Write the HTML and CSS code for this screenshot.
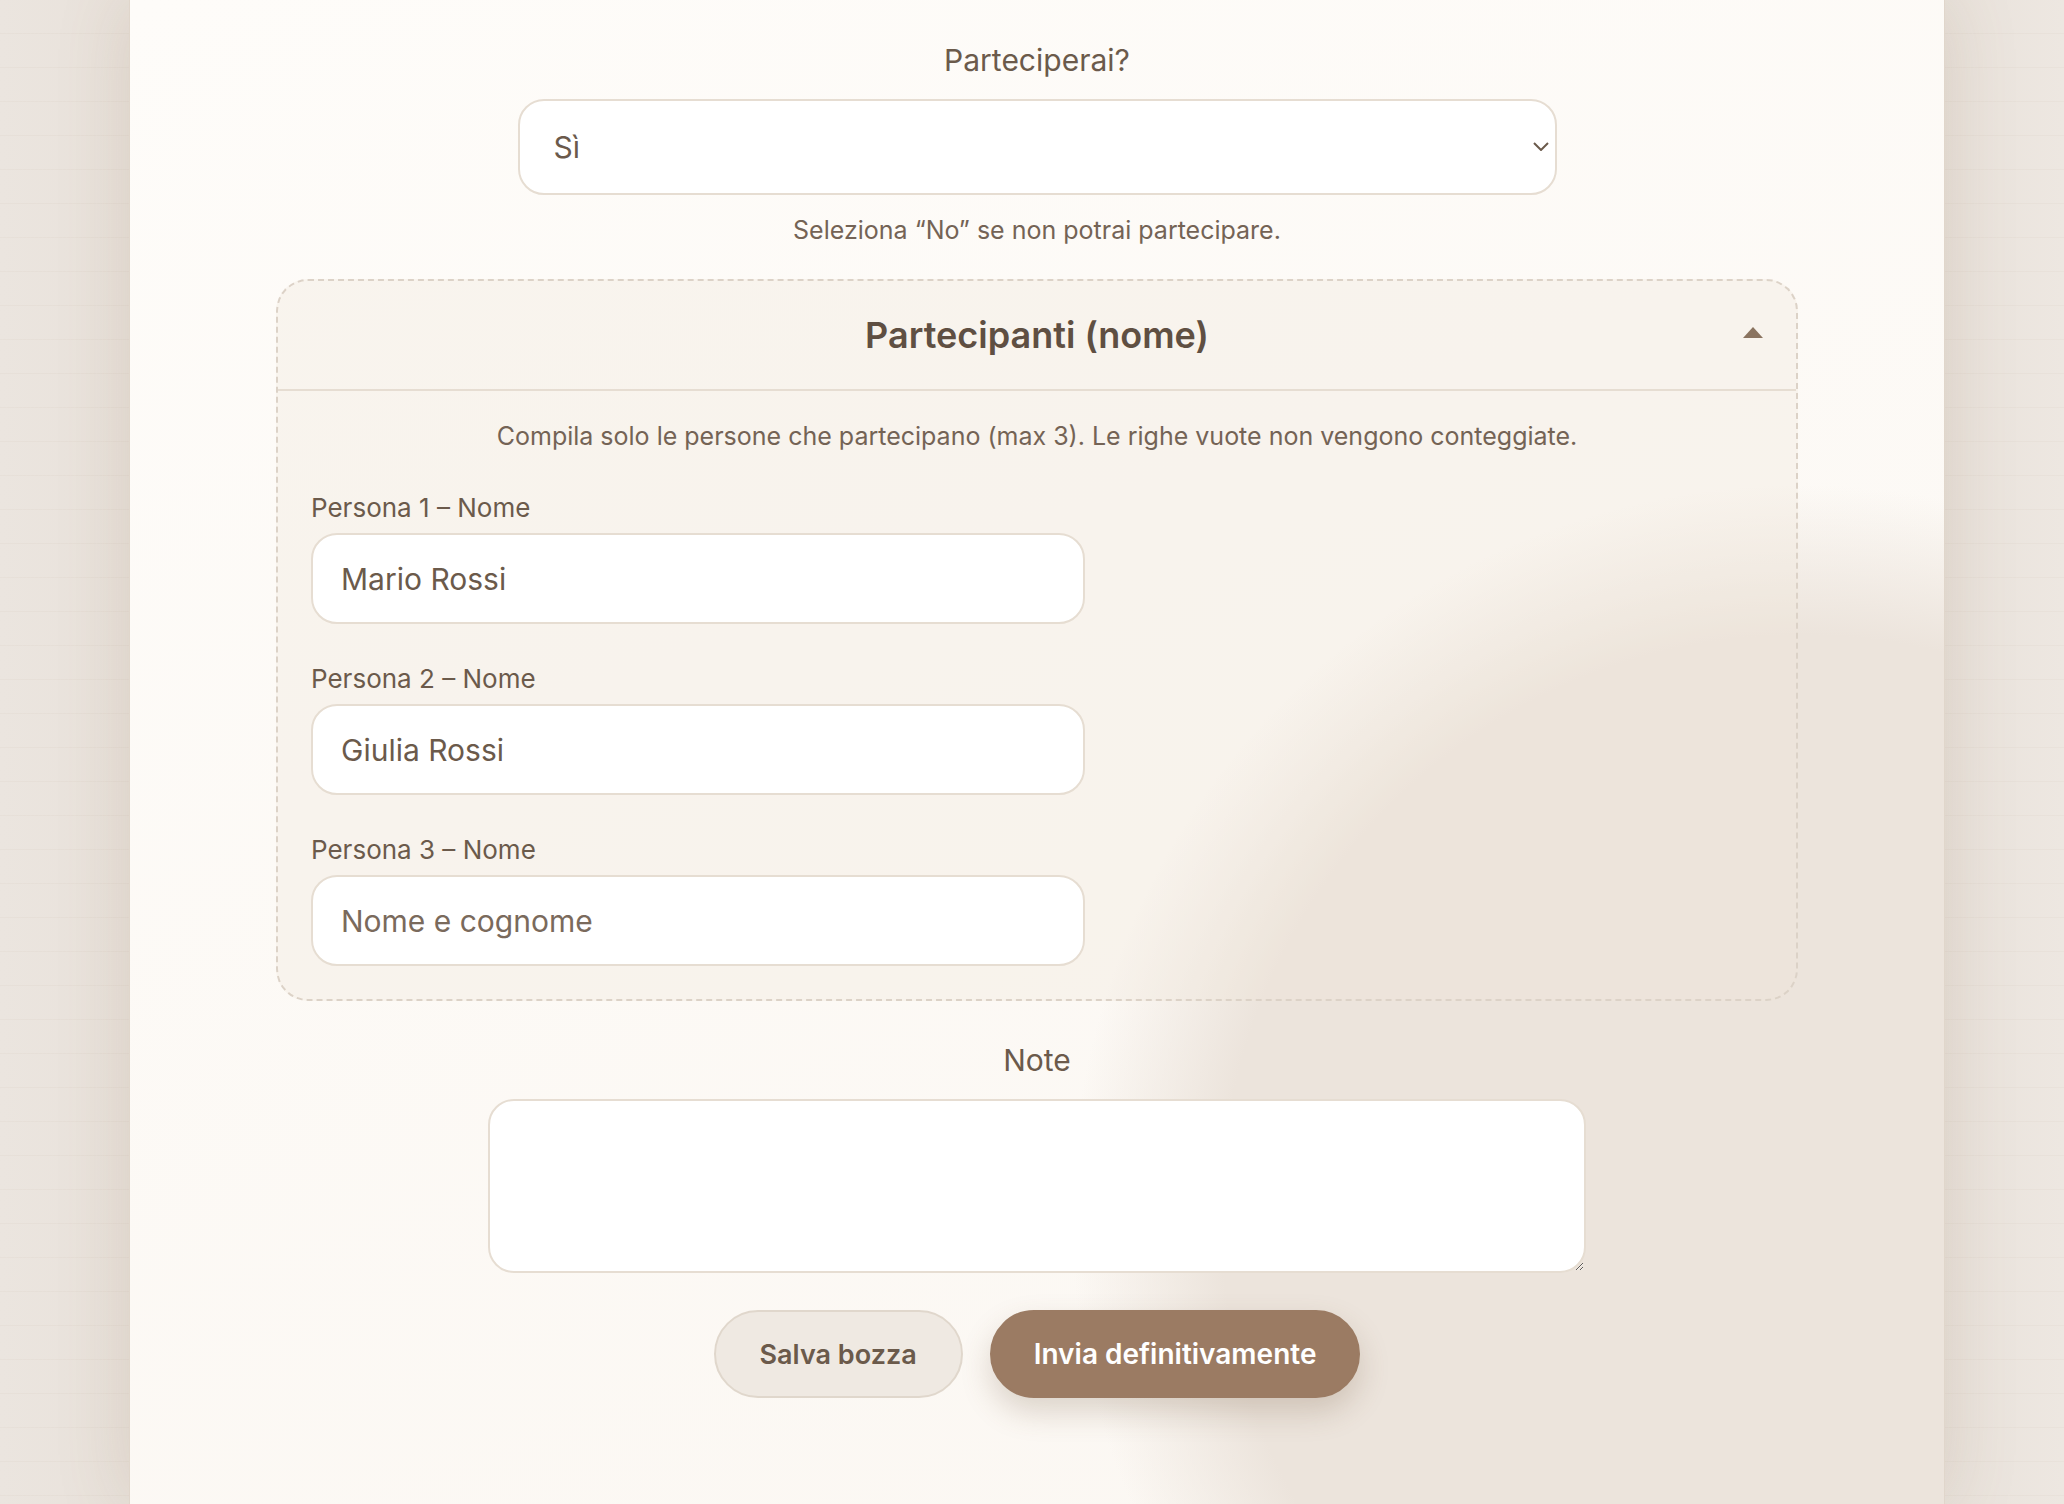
FILE: index.html
```html
<!DOCTYPE html>
<html lang="it">
<head>
  <meta charset="UTF-8" />
  <meta name="viewport" content="width=device-width, initial-scale=1.0"/>
  <title>Conferma partecipazione</title>
  <link rel="stylesheet" href="styles.css">
</head>
<body>
  <main class="sheet">
    <form class="rsvp" onsubmit="return false">

      <div class="field">
        <label class="field-label" for="attend">Parteciperai?</label>
        <div class="select-wrap">
          <select class="control select" id="attend">
            <option>Sì</option>
            <option>No</option>
          </select>
          <svg class="chevron" viewBox="0 0 16 9" aria-hidden="true"><path d="M1 1 L8 8 L15 1"/></svg>
        </div>
        <p class="help">Seleziona “No” se non potrai partecipare.</p>
      </div>

      <details class="guests" open>
        <summary class="guests-head">
          <span class="guests-title">Partecipanti (nome)</span>
          <svg class="caret" viewBox="0 0 20 11" aria-hidden="true"><path d="M10 0 L20 11 L0 11 Z"/></svg>
        </summary>
        <div class="guests-body">
          <p class="help">Compila solo le persone che partecipano (max 3). Le righe vuote non vengono conteggiate.</p>

          <div class="guest">
            <label class="guest-label" for="p1">Persona 1 – Nome</label>
            <input class="control guest-input" id="p1" type="text" value="Mario Rossi" placeholder="Nome e cognome">
          </div>
          <div class="guest">
            <label class="guest-label" for="p2">Persona 2 – Nome</label>
            <input class="control guest-input" id="p2" type="text" value="Giulia Rossi" placeholder="Nome e cognome">
          </div>
          <div class="guest">
            <label class="guest-label" for="p3">Persona 3 – Nome</label>
            <input class="control guest-input" id="p3" type="text" placeholder="Nome e cognome">
          </div>
        </div>
      </details>

      <div class="field field-notes">
        <label class="field-label" for="notes">Note</label>
        <textarea class="control notes" id="notes"></textarea>
      </div>

      <div class="actions">
        <button class="btn btn-ghost" type="button">Salva bozza</button>
        <button class="btn btn-primary" type="submit">Invia definitivamente</button>
      </div>

    </form>
  </main>
</body>
</html>
```

FILE: styles.css
```css
* {
  box-sizing: border-box;
}

body {
  margin: 0;
  min-height: 100vh;
  font-family: Inter, "Noto Sans", sans-serif;
  color: #6b5a4b;
  background:
    repeating-linear-gradient(to bottom, transparent 0 33px, rgba(150, 120, 90, 0.045) 33px 34px),
    linear-gradient(to right, #ebe5df, #e9e2db 6%, #efe9e3 50%, #e9e2db 94%, #ede7e1);
}

/* paper sheet with the soft blob in the lower corner */
.sheet {
  width: 1816px;
  min-height: 100vh;
  margin-left: 129px;
  padding-top: 41px;
  border-left: 1px solid #e0d6cb;
  border-right: 1px solid #e0d6cb;
  background:
    radial-gradient(circle at 1671px 1215px, #ece4dc 0, #ece4dc 580px, rgba(236, 228, 220, 0) 730px),
    linear-gradient(160deg, #fefcf9, #fbf7f2);
  box-shadow: 0 0 70px rgba(130, 100, 70, 0.16);
}

.rsvp {
  display: flex;
  flex-direction: column;
  align-items: center;
}

.field {
  display: flex;
  flex-direction: column;
  align-items: center;
}

.field-label {
  font-size: 30px;
  line-height: 39px;
  margin-bottom: 19px;
}

.control {
  font: inherit;
  font-size: 30px;
  color: #6b5a4b;
  background: #fff;
  border: 2px solid #e6ddd2;
  border-radius: 26px;
  padding: 0 28px;
  outline: none;
}

.control::placeholder {
  color: #7a6a5c;
  opacity: 1;
}

.select-wrap {
  position: relative;
}

.select {
  width: 1039px;
  height: 96px;
  padding-left: 34px;
  padding-right: 40px;
  appearance: none;
  -webkit-appearance: none;
}

.chevron {
  position: absolute;
  right: 8px;
  top: 43px;
  width: 16px;
  height: 9px;
  fill: none;
  stroke: #6b5a4b;
  stroke-width: 2;
  pointer-events: none;
}

.help {
  margin: 18px 0 0;
  font-size: 25px;
  line-height: 34px;
  color: #746355;
  text-align: center;
}

/* participants box */
.guests {
  width: 1522px;
  margin-top: 32px;
  border: 2px dashed #dcd2c7;
  border-radius: 32px;
  background: rgba(240, 230, 218, 0.32);
}

.guests-head {
  display: grid;
  grid-template-columns: 1fr auto 1fr;
  align-items: center;
  height: 110px;
  padding: 0 33px;
  border-bottom: 2px solid #e6ddd2;
  list-style: none;
  cursor: pointer;
}

.guests-head::-webkit-details-marker {
  display: none;
}

.guests-title {
  grid-column: 2;
  font-size: 36px;
  font-weight: 600;
  color: #5f4f42;
}

.caret {
  grid-column: 3;
  justify-self: end;
  width: 20px;
  height: 11px;
  margin-top: -6px;
  fill: #8a735f;
}

.guests-body {
  padding: 28px 33px 33px;
}

.guests-body .help {
  margin: 0;
}

.guest {
  display: flex;
  flex-direction: column;
  align-items: flex-start;
  margin-top: 38px;
}

.guest-label {
  font-size: 26px;
  line-height: 34px;
  margin-bottom: 8px;
}

.guest-input {
  width: 774px;
  height: 91px;
}

/* notes + buttons */
.field-notes {
  margin-top: 40px;
}

.notes {
  width: 1098px;
  height: 174px;
  padding: 20px 28px;
  resize: vertical;
}

.actions {
  display: flex;
  gap: 27px;
  margin-top: 37px;
  margin-bottom: 80px;
}

.btn {
  height: 88px;
  padding: 0 44px;
  border-radius: 44px;
  font: 600 28px Inter, "Noto Sans", sans-serif;
  cursor: pointer;
}

.btn-ghost {
  color: #6b5a4b;
  background: #efe9e2;
  border: 2px solid #e0d7cc;
  font-size: 27px;
}

.btn-primary {
  color: #fff;
  background: #9b7b63;
  border: 2px solid #9b7b63;
  padding: 0 42px;
  box-shadow: 0 14px 30px rgba(110, 80, 55, 0.22);
}
```
